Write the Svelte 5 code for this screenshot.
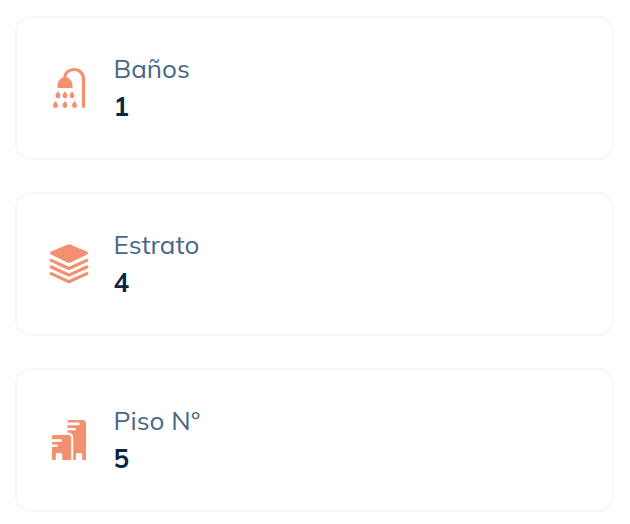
<script lang="ts">
	type Feature = {
		icon: 'shower' | 'layers' | 'building';
		label: string;
		value: number;
	};

	const features: Feature[] = [
		{ icon: 'shower', label: 'Baños', value: 1 },
		{ icon: 'layers', label: 'Estrato', value: 4 },
		{ icon: 'building', label: 'Piso N°', value: 5 }
	];

	const drops = [
		[14, 31.3],
		[21, 31.3],
		[28, 31.3],
		[11.5, 41],
		[21, 41],
		[30.5, 41]
	];
</script>

<ul class="features">
	{#each features as feature}
		<li class="card">
			<svg class="icon" viewBox="4 6 40 44" aria-hidden="true">
				{#if feature.icon === 'shower'}
					<path class="pipe" d="M20.8 19V17.5C21.2 12.5 25 9.5 30 9.5C35.5 9.5 39.5 13.5 39.5 19V46.5" />
					<path d="M13.4 26.5C13.4 21.5 16.5 17.3 21 17.3S28.6 21.5 28.6 26.5Q28.6 28 27.3 28H14.7Q13.4 28 13.4 26.5Z" />
					{#each drops as [x, y]}
						<path transform="translate({x} {y})" d="M0 0C.8 1.4 2.5 2.7 2.5 4.3C2.5 5.9 1.4 6.9 0 6.9S-2.5 5.9-2.5 4.3C-2.5 2.7-.8 1.4 0 0Z" />
					{/each}
				{:else if feature.icon === 'layers'}
					<path d="M23.3 8.7Q25 8 26.7 8.7L43 15.5Q45 17 43 18.6L26.7 26.4Q25 27.2 23.3 26.4L7 18.6Q5 17 7 15.5Z" />
					<path class="layer" d="M7.2 24.4L25 32.5L42.8 24.4M7.2 31L25 39.1L42.8 31M7.2 37.6L25 45.7L42.8 37.6" />
				{:else}
					<path d="M8 25V24.5Q8 23 9.5 23H24.5Q27.2 23 27.2 26V48H18.2V42.5Q18.2 41 16.7 41H13.3Q11.8 41 11.8 42.5V48H8V35H12.7Q13.8 35 13.8 33.8T12.7 32.6H8V30H16.8Q18 30 18 28.6T16.8 27.2H8Z" />
					<path d="M23.4 12V9.5Q23.4 8 24.9 8H38.5Q42 8 42 11.5V48H38.2V42.5Q38.2 41 36.7 41H33.4Q31.9 41 31.9 42.5V48H29.2V26Q29.2 21 25 20.8Q23.4 20.8 23.4 19.2V18.2H31Q32 18.2 32 17.1T31 16H23.4V13.2H34.6Q35.7 13.2 35.7 11.9T34.6 10.6H23.4Z" />
				{/if}
			</svg>

			<div class="details">
				<p class="label">{feature.label}</p>
				<p class="value">{feature.value}</p>
			</div>
		</li>
	{/each}
</ul>

<style>
	:global(body) {
		margin: 0;
		background: #fff;
		font-family: Mulish, Inter, sans-serif;
	}

	.features {
		display: grid;
		gap: 32px;
		margin: 0;
		padding: 16px 16px 12px 15px;
		list-style: none;
	}

	.card {
		display: flex;
		align-items: center;
		gap: 25.6px;
		box-sizing: border-box;
		height: 144px;
		padding: 0 31px;
		border: 2px solid #f4f7fd;
		border-radius: 16px;
	}

	.icon {
		flex: none;
		width: 40px;
		height: 44px;
		fill: #f3906f;
		overflow: visible;
	}

	.pipe,
	.layer {
		fill: none;
		stroke: #f3906f;
		stroke-width: 3.2;
		stroke-linecap: round;
		stroke-linejoin: round;
	}

	.details {
		line-height: 38px;
	}

	.label,
	.value {
		margin: 0;
	}

	.label {
		color: #476788;
		font-size: 26px;
		font-weight: 400;
	}

	.value {
		color: #0b2545;
		font-size: 26px;
		font-weight: 700;
	}
</style>
